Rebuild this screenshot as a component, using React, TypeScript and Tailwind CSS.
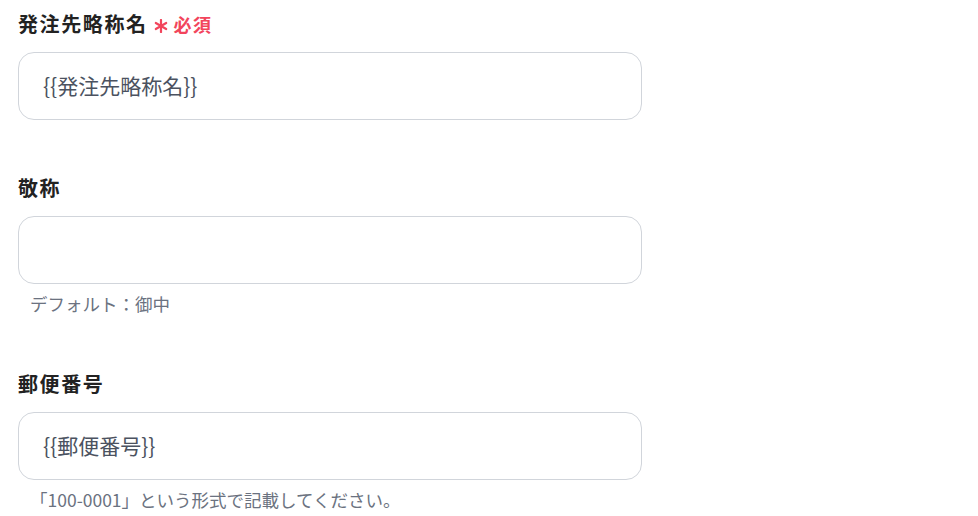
import React from "react";

const font = { fontFamily: '"Noto Sans CJK JP", "Noto Sans", sans-serif' };

function Asterisk() {
  return (
    <svg width="14" height="14" viewBox="0 0 14 14" className="block">
      <g stroke="#f2455c" strokeWidth="2.2" strokeLinecap="round">
        <line x1="7" y1="1" x2="7" y2="13" />
        <line x1="1.8" y1="4" x2="12.2" y2="10" />
        <line x1="1.8" y1="10" x2="12.2" y2="4" />
      </g>
    </svg>
  );
}

function Field({
  label,
  required,
  value,
  help,
}: {
  label: string;
  required?: boolean;
  value: string;
  help?: string;
}) {
  return (
    <div className="flex flex-col">
      <div className="flex items-center h-[28px]">
        <span className="text-[20px] font-bold text-[#222222] leading-[28px] tracking-[1.6px]">{label}</span>
        {required && (
          <span className="ml-[6px] flex items-center text-[#f2455c] font-bold">
            <span className="mt-[4px]">
              <Asterisk />
            </span>
            <span className="ml-[6px] text-[18px] leading-[28px] tracking-[1.5px]">必須</span>
          </span>
        )}
      </div>
      <div className="mt-[14px] h-[68px] w-[624px] rounded-[16px] border border-[#d1d5db] bg-white flex items-center px-[24px]">
        <span className="text-[21px] text-[#4b5260]">{value}</span>
      </div>
      {help && (
        <div className="mt-[8px] pl-[12px] text-[17.5px] leading-[24px] text-[#6b7280]">{help}</div>
      )}
    </div>
  );
}

export default function App() {
  return (
    <div className="w-[978px] h-[516px] bg-white overflow-hidden pl-[18px] pt-[10px] flex flex-col gap-[54px]" style={font}>
      <Field label="発注先略称名" required value="{{発注先略称名}}" />
      <Field label="敬称" value="" help="デフォルト：御中" />
      <Field label="郵便番号" value="{{郵便番号}}" help="「100-0001」という形式で記載してください。" />
    </div>
  );
}
